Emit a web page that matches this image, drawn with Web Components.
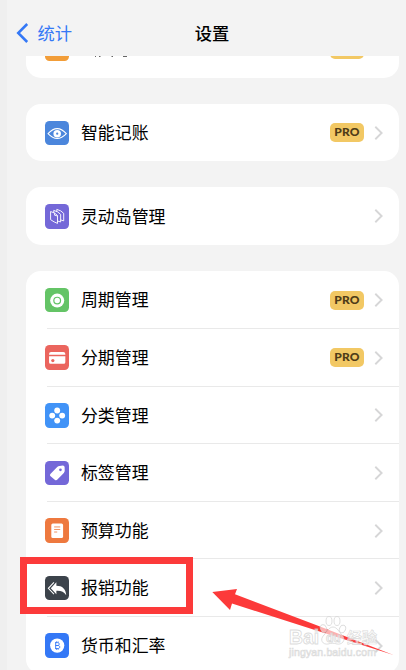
<!DOCTYPE html>
<html lang="zh-CN">
<head>
<meta charset="utf-8">
<meta name="viewport" content="width=device-width, initial-scale=1">
<title>设置</title>
<style>
  html, body {
    margin: 0;
    height: 100%;
    overflow: hidden;
    background: #f3f3f3;
    color: #000;
    font-family: "Liberation Sans", "Noto Sans CJK SC", sans-serif;
  }
</style>
</head>
<body>
<settings-page></settings-page>

<script>
const ICONS = {
  blank: "",
  eye: `<path d="M3 12.4Q12 2.4 21 12.4Q12 22 3 12.4Z" fill="none" stroke="#fff" stroke-width="1"/><circle cx="12" cy="12.4" r="3.7" fill="#fff"/><circle cx="12" cy="12.4" r="1.1" fill="#4b86dc"/>`,
  pages: `<g fill="#7468d8" stroke="#fff" stroke-width=".9" stroke-linejoin="round"><path d="M11.600 5.200l3.900 1.500 2.900 2.400v7.400l-3.400-1.100-3.400-2z"/><path d="M8.600 6.200l3.900 1.500 2.900 2.400v7.500l-3.400-1.100-3.400-2z"/><path d="M5.500 7.300l3.900 1.500 2.900 2.400v7.800L9 17.500l-3.500-2.200z"/><path d="M9.400 8.900v2l2.800.8" fill="none"/></g>`,
  ring: `<circle cx="12" cy="12.3" r="6.900" fill="#fff"/><circle cx="12" cy="12.3" r="3.300" fill="none" stroke="#64c466" stroke-width="1.200"/>`,
  card: `<path d="M4 8.800q0-2 2-2h12q2 0 2 2v.6H4zM4 11h16v5.900q0 1.500-1.500 1.500h-13Q4 18.400 4 16.900z" fill="#fff"/><circle cx="7.700" cy="15.200" r="1.600" fill="#eb655e"/>`,
  dots: `<g fill="#fff"><circle cx="12" cy="7.300" r="2.900"/><circle cx="12" cy="17.200" r="2.900"/><circle cx="7.100" cy="12.300" r="2.900"/><circle cx="16.900" cy="12.300" r="2.900"/></g>`,
  tag: `<path d="M5.300 12.700l6.700-6.900q1-1 2.300-1.100l3.300-.3q1.500 0 1.700 1.500l.1 3.700q0 1.100-.9 2.100l-6.300 6.500q-1.200 1.200-2.600.1l-4.100-3.300q-1.300-1.100-.2-2.300z" fill="#fff"/><circle cx="15.200" cy="8.600" r="1.300" fill="#7468d8"/>`,
  sheet: `<rect x="6.200" y="5.300" width="11.600" height="14.300" rx="1.500" fill="#fff"/><path d="M9 8.700h6M9 11.200h6M9 13.700h3" stroke="#ee793f" stroke-width=".8"/>`,
  reply: `<path d="M11.200 6.100v3.300c6 0 9.200 3.100 9.700 9.400-2-3.300-5.100-4.500-9.700-4.300v3.400L5.700 12z" fill="#fff"/><path d="M8.800 6.200L3.300 12l5.500 5.700" fill="none" stroke="#fff" stroke-width="1"/>`,
  coin: `<circle cx="12" cy="12.300" r="7" fill="#fff"/><path d="M10 9.400h2.500c2 0 2 2.800 0 2.800H10.500h2.300c2.300 0 2.300 3 0 3H10M10.500 9.200v6.200M11.300 8.200v1.200M12.900 8.200v1.200M11.300 15.200v1.200M12.900 15.200v1.200" fill="none" stroke="#3478f6" stroke-width=".9"/>`
};

class NavBar extends HTMLElement {
  constructor() {
    super();
    this.attachShadow({ mode: "open" });
    this.shadowRoot.innerHTML = `
      <style>
        :host {
          display: grid;
          grid-template-columns: 1fr auto 1fr;
          align-items: center;
          height: 56px;
          box-sizing: border-box;
          padding: 10px 0 0 9px;
          background: #f3f3f3;
          position: relative;
          z-index: 1;
        }
        .back {
          display: flex;
          align-items: center;
          gap: 8.5px;
          color: #3478f6;
          font-size: 17.3px;
        }
        .title {
          font-size: 17.3px;
          font-weight: 500;
          margin-left: 2px;
          font-family: "Noto Sans CJK SC", sans-serif;
        }
        svg { display: block; }
        slot {
          display: block;
          line-height: 26px;
        }
        .back slot { padding-top: 2px; }
      </style>
      <div class="back">
        <svg width="13" height="20" viewBox="0 0 13 20"><path d="M11.200 1L2.200 10l9 9" fill="none" stroke="currentColor" stroke-width="2.500"/></svg>
        <slot name="back"></slot>
      </div>
      <div class="title"><slot></slot></div>
    `;
  }
}

class SettingsGroup extends HTMLElement {
  constructor() {
    super();
    this.attachShadow({ mode: "open" });
    this.shadowRoot.innerHTML = `
      <style>
        :host {
          display: block;
          overflow: hidden;
          border-radius: 15px;
          background: #fff;
        }
        ::slotted(:not(:first-child)) {
          --line: #e9e9e9;
        }
      </style>
      <slot></slot>
    `;
  }
}

class ProBadge extends HTMLElement {
  constructor() {
    super();
    this.attachShadow({ mode: "open" });
    this.shadowRoot.innerHTML = `
      <style>
        :host {
          display: flex;
          align-items: center;
          justify-content: center;
          width: 34px;
          height: 19px;
          border-radius: 5px;
          background: #f2c864;
          color: #4f3c18;
          font: 900 12px/18px Lato, sans-serif;
          letter-spacing: 0.2px;
        }
        slot {
          display: block;
          height: 19px;
        }
      </style>
      <slot></slot>
    `;
  }
}

class SettingsRow extends HTMLElement {
  constructor() {
    super();
    this.attachShadow({ mode: "open" });
  }

  connectedCallback() {
    const icon = ICONS[this.getAttribute("icon")];
    const color = this.getAttribute("color");
    this.shadowRoot.innerHTML = `
      <style>
        :host {
          display: flow-root;
          height: 57.6px;
          padding-left: 19px;
        }
        .line {
          height: 1px;
          margin: -0.6px 0 -0.4px 2px;
          background: var(--line, transparent);
        }
        .row {
          display: flex;
          align-items: center;
          height: 100%;
          box-sizing: border-box;
          padding: 0.8px 15px 0 0;
        }
        .tile {
          display: block;
          width: 24.4px;
          height: 24.6px;
          border-radius: 4.5px;
          background: ${color};
        }
        .label {
          flex: 1;
          margin-left: 11.6px;
          padding-top: 2.6px;
          font-size: 16.9px;
          line-height: 24px;
          white-space: nowrap;
        }
        .arrow {
          display: block;
          margin-left: 10px;
        }
      </style>
      <div class="line"></div>
      <div class="row">
        <svg class="tile" viewBox="0 0 24 24">${icon}</svg>
        <span class="label"><slot></slot></span>
        ${this.hasAttribute("pro") ? "<pro-badge>PRO</pro-badge>" : ""}
        <svg class="arrow" width="10" height="14" viewBox="0 0 10 14"><path d="M1.300 .8l6.300 6.200-6.300 6.200" fill="none" stroke="#d6d6d7" stroke-width="1.900"/></svg>
      </div>
    `;
  }
}

// Red frame and arrow that point at one row
class CalloutMark extends HTMLElement {
  constructor() {
    super();
    this.attachShadow({ mode: "open" });
    this.shadowRoot.innerHTML = `
      <style>
        :host {
          position: absolute;
          left: 0;
          top: 0;
          z-index: 2;
        }
        svg { display: block; }
      </style>
      <svg width="406" height="670" viewBox="0 0 406 670">
        <rect x="23.500" y="560.500" width="166" height="50" fill="none" stroke="#fc3a3a" stroke-width="7"/>
        <path d="M212.300 592L237 589l-2 5.200L320 626.500L393.500 655L318 631L232 603.500L230 610z" fill="#fc3a3a"/>
      </svg>
    `;
  }
}

class WaterMark extends HTMLElement {
  constructor() {
    super();
    this.attachShadow({ mode: "open" });
    this.shadowRoot.innerHTML = `
      <style>
        :host {
          position: absolute;
          left: 0;
          top: 0;
          z-index: 3;
        }
        svg { display: block; }
        text { font-weight: bold; }
      </style>
      <svg width="406" height="670" viewBox="0 0 406 670" fill="#fff" fill-opacity=".6" stroke="#d0d0d0" stroke-opacity=".75" stroke-width=".9">
        <text x="289" y="643.500" font-size="20" textLength="30" lengthAdjust="spacingAndGlyphs" font-family="Liberation Sans, sans-serif">Bai</text>
        <ellipse cx="323.500" cy="628.500" rx="3" ry="4" transform="rotate(-20 323.500 628.500)"/>
        <ellipse cx="329" cy="621" rx="3" ry="4.500"/>
        <ellipse cx="337" cy="621" rx="3" ry="4.500"/>
        <ellipse cx="342.500" cy="629" rx="3" ry="4" transform="rotate(20 342.500 629)"/>
        <path d="M333 627c4 0 6 5 9 8 5 6-1 10-5 9-3-1-6-1-9 0-5 1-9-4-4-9 3-3 5-8 9-8z"/>
        <text x="326" y="642" font-size="12" font-family="Liberation Sans, sans-serif">du</text>
        <text x="347" y="643" font-size="15" stroke-width=".7" font-family="Noto Sans CJK SC, sans-serif">经验</text>
        <text x="289" y="656" font-size="10.500" textLength="87" stroke-width=".7" style="font-weight: normal" font-family="Liberation Sans, sans-serif">jingyan.baidu.com</text>
      </svg>
    `;
  }
}

class SettingsPage extends HTMLElement {
  constructor() {
    super();
    this.attachShadow({ mode: "open" });
    this.shadowRoot.innerHTML = `
      <style>
        :host {
          display: block;
          position: relative;
          height: 670px;
          overflow: hidden;
          box-sizing: border-box;
          border-left: 7px solid #efefef;
        }
        .list {
          display: flex;
          flex-direction: column;
          gap: 26.1px;
          padding: 0 7px 0 19px;
          margin-top: -36.100px;
        }
        .peek {
          display: block;
          margin-top: -1px;
        }
        callout-mark, water-mark { left: -7px; }
      </style>
      <nav-bar><span slot="back">统计</span>设置</nav-bar>
      <div class="list">
        <settings-group>
          <settings-row icon="blank" color="#f29d38" pro>
            <svg class="peek" width="60" height="24" viewBox="0 0 60 24"><path d="M14 18.500h1M18 18.500h1.500M30.500 18.500h1.500M42 18.500h4" stroke="#666" stroke-width="1"/></svg>
          </settings-row>
        </settings-group>
        <settings-group>
          <settings-row icon="eye" color="#4b86dc" pro>智能记账</settings-row>
        </settings-group>
        <settings-group>
          <settings-row icon="pages" color="#7468d8">灵动岛管理</settings-row>
        </settings-group>
        <settings-group>
          <settings-row icon="ring" color="#64c466" pro>周期管理</settings-row>
          <settings-row icon="card" color="#eb655e" pro>分期管理</settings-row>
          <settings-row icon="dots" color="#4193f7">分类管理</settings-row>
          <settings-row icon="tag" color="#7468d8">标签管理</settings-row>
          <settings-row icon="sheet" color="#ee793f">预算功能</settings-row>
          <settings-row icon="reply" color="#3c434b">报销功能</settings-row>
          <settings-row icon="coin" color="#3478f6">货币和汇率</settings-row>
        </settings-group>
      </div>
      <callout-mark></callout-mark>
      <water-mark></water-mark>
    `;
  }
}

customElements.define("nav-bar", NavBar);
customElements.define("settings-group", SettingsGroup);
customElements.define("pro-badge", ProBadge);
customElements.define("settings-row", SettingsRow);
customElements.define("callout-mark", CalloutMark);
customElements.define("water-mark", WaterMark);
customElements.define("settings-page", SettingsPage);
</script>
</body>
</html>
